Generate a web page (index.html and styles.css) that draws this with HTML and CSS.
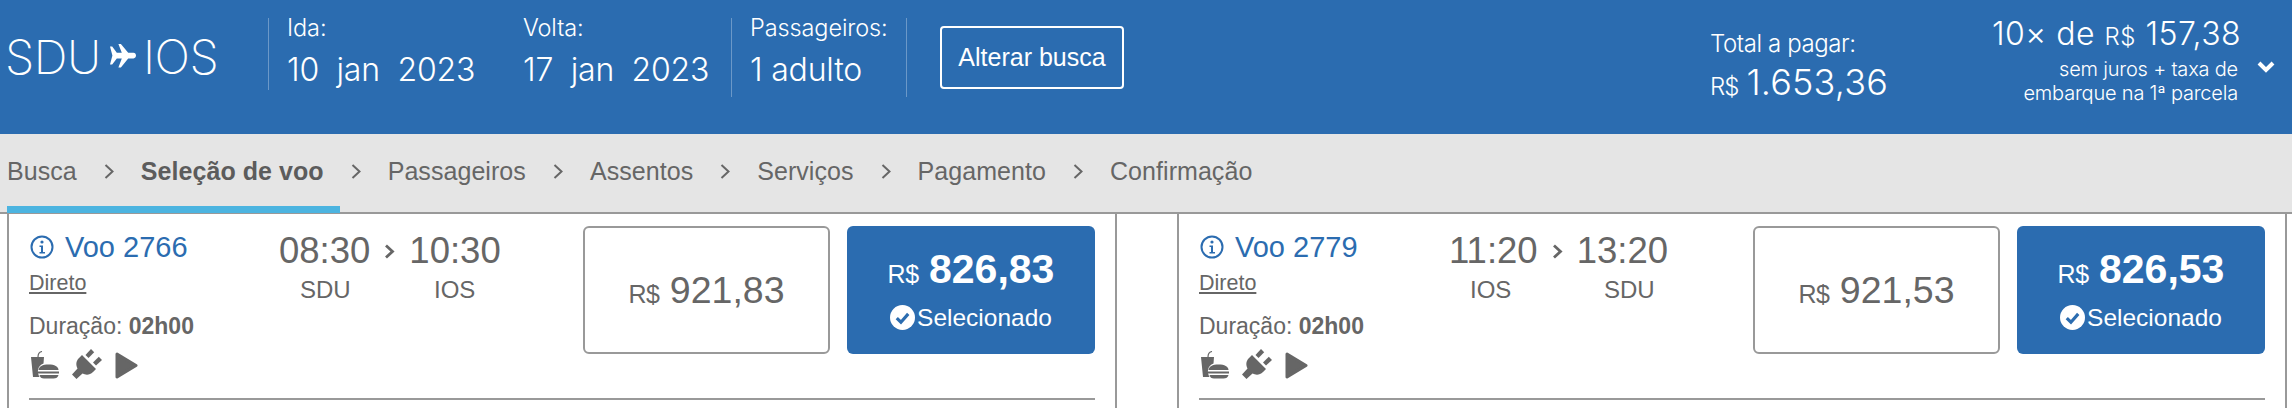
FILE: index.html
```html
<!DOCTYPE html>
<html lang="pt-BR">
<head>
<meta charset="utf-8">
<title>Seleção de voo</title>
<link rel="stylesheet" href="styles.css">
</head>
<body>
<header class="top">
  <div class="route">
    <span>SDU</span>
    <svg class="plane" viewBox="0 0 26 24"><path d="M0 2.500h2.200l4.600 6.300h5L8.400 0h2.500l7.300 8.800h5.300c1.500 0 2.500 1.300 2.500 2.800s-1 2.800-2.500 2.800h-5.300l-7.300 9.100H8.400l3.400-9.100h-5l-4.600 6.200H0l2.400-9z" fill="#fff"/></svg>
    <span>IOS</span>
  </div>
  <div class="field field-date">
    <div class="label">Ida:</div>
    <div class="value">10&nbsp; jan&nbsp; 2023</div>
  </div>
  <div class="field field-date2">
    <div class="label">Volta:</div>
    <div class="value">17&nbsp; jan&nbsp; 2023</div>
  </div>
  <div class="field field-pax">
    <div class="label">Passageiros:</div>
    <div class="value">1 adulto</div>
  </div>
  <button class="change">Alterar busca</button>
  <div class="total">
    <div class="total-label">Total a pagar:</div>
    <div class="total-value"><small>R$</small>1.653,36</div>
  </div>
  <div class="install">
    <div class="install-main">10× de <small>R$</small> 157,38</div>
    <div class="install-note">sem juros + taxa de<br>embarque na 1ª parcela</div>
  </div>
  <svg class="drop" viewBox="0 0 18 12"><path d="M2 2l7 7 7-7" fill="none" stroke="#fff" stroke-width="4"/></svg>
</header>

<nav class="steps">
  <span>Busca</span>
  <svg class="sep" viewBox="0 0 10 15"><path d="M1.500 1l7 6.500-7 6.500" fill="none" stroke="#666" stroke-width="2"/></svg>
  <b>Seleção de voo</b>
  <svg class="sep" viewBox="0 0 10 15"><path d="M1.500 1l7 6.500-7 6.500" fill="none" stroke="#666" stroke-width="2"/></svg>
  <span>Passageiros</span>
  <svg class="sep" viewBox="0 0 10 15"><path d="M1.500 1l7 6.500-7 6.500" fill="none" stroke="#666" stroke-width="2"/></svg>
  <span>Assentos</span>
  <svg class="sep" viewBox="0 0 10 15"><path d="M1.500 1l7 6.500-7 6.500" fill="none" stroke="#666" stroke-width="2"/></svg>
  <span>Serviços</span>
  <svg class="sep" viewBox="0 0 10 15"><path d="M1.500 1l7 6.500-7 6.500" fill="none" stroke="#666" stroke-width="2"/></svg>
  <span>Pagamento</span>
  <svg class="sep" viewBox="0 0 10 15"><path d="M1.500 1l7 6.500-7 6.500" fill="none" stroke="#666" stroke-width="2"/></svg>
  <span>Confirmação</span>
  <i class="progress"></i>
</nav>

<main class="cards">
  <section class="card">
    <div class="flight">
      <div class="info">
        <a class="code">
          <svg class="i-info" viewBox="0 0 24 24"><circle cx="12" cy="12" r="10.500" fill="none" stroke="#2b6cb0" stroke-width="2"/><circle cx="12" cy="7" r="1.600" fill="#2b6cb0"/><path d="M9.500 10.500h3.500v6.500h2v1.500H9.500V17h1.500v-5H9.500z" fill="#2b6cb0"/></svg>
          Voo 2766
        </a>
        <div class="direct">Direto</div>
        <div class="dur">Duração: <b>02h00</b></div>
        <div class="amen">
          <svg class="a-food" viewBox="0 0 28 28"><path d="M0 6h13l-.5 6.500c-3 1-5 3.500-5.500 6.500-.3 2 .2 5 1.500 7H2z" fill="#666"/><path d="M7 6c0-3 1-5 4-5.500" fill="none" stroke="#666" stroke-width="1.200"/><path d="M7.500 19c.3-3.500 4-5.500 10-5.500s10 2 10 5.500z M7 20.500h21v2H7z M8 24h19.500c-.5 2.500-2.500 3.500-5 3.500h-9.500c-2.500 0-4-1-4.500-3.500z" fill="#666"/></svg>
          <svg class="a-plug" viewBox="0 0 30 30"><g fill="#666"><path d="M10 6l14 14-3 3c-3.500 3.500-7.500 3-10.500 1.500L4.500 30 0 25.500l5.500-6C4 16.500 3.500 12.500 7 9z"/><path d="M13.500 6l5.500-6 3.200 3.200-5.700 5.800z"/><path d="M21 13.500l5.800-5.700 3.200 3.200-6 5.500z"/></g></svg>
          <svg class="a-play" viewBox="0 0 23 27"><path d="M2 2l19 11.500L2 25z" fill="#666" stroke="#666" stroke-width="3" stroke-linejoin="round"/></svg>
        </div>
      </div>
      <div class="times">
        <div class="clock"><span>08:30</span><svg class="t-sep" viewBox="0 0 11 15"><path d="M2 1.500l6.500 6-6.500 6" fill="none" stroke="#666" stroke-width="2.800"/></svg><span>10:30</span></div>
        <div class="ports"><span>SDU</span><span>IOS</span></div>
      </div>
      <div class="fare">
        <div class="fare-main"><small>R$</small> 921,83</div>
      </div>
      <div class="fare selected">
        <div class="fare-main"><small>R$</small> <b>826,83</b></div>
        <div class="fare-state">
          <svg class="check" viewBox="0 0 24 24"><circle cx="12" cy="12" r="12" fill="#fff"/><path d="M6.500 12.500l4 4 7-8" fill="none" stroke="#2b6cb0" stroke-width="3"/></svg>Selecionado
        </div>
      </div>
    </div>
    <hr class="rule">
  </section>

  <section class="card">
    <div class="flight">
      <div class="info">
        <a class="code">
          <svg class="i-info" viewBox="0 0 24 24"><circle cx="12" cy="12" r="10.500" fill="none" stroke="#2b6cb0" stroke-width="2"/><circle cx="12" cy="7" r="1.600" fill="#2b6cb0"/><path d="M9.500 10.500h3.500v6.500h2v1.500H9.500V17h1.500v-5H9.500z" fill="#2b6cb0"/></svg>
          Voo 2779
        </a>
        <div class="direct">Direto</div>
        <div class="dur">Duração: <b>02h00</b></div>
        <div class="amen">
          <svg class="a-food" viewBox="0 0 28 28"><path d="M0 6h13l-.5 6.500c-3 1-5 3.500-5.500 6.500-.3 2 .2 5 1.500 7H2z" fill="#666"/><path d="M7 6c0-3 1-5 4-5.500" fill="none" stroke="#666" stroke-width="1.200"/><path d="M7.500 19c.3-3.500 4-5.500 10-5.500s10 2 10 5.500z M7 20.500h21v2H7z M8 24h19.500c-.5 2.500-2.500 3.500-5 3.500h-9.500c-2.500 0-4-1-4.500-3.500z" fill="#666"/></svg>
          <svg class="a-plug" viewBox="0 0 30 30"><g fill="#666"><path d="M10 6l14 14-3 3c-3.500 3.500-7.500 3-10.500 1.500L4.500 30 0 25.500l5.500-6C4 16.500 3.500 12.500 7 9z"/><path d="M13.500 6l5.500-6 3.200 3.200-5.700 5.800z"/><path d="M21 13.500l5.800-5.700 3.200 3.200-6 5.500z"/></g></svg>
          <svg class="a-play" viewBox="0 0 23 27"><path d="M2 2l19 11.500L2 25z" fill="#666" stroke="#666" stroke-width="3" stroke-linejoin="round"/></svg>
        </div>
      </div>
      <div class="times">
        <div class="clock"><span>11:20</span><svg class="t-sep" viewBox="0 0 11 15"><path d="M2 1.500l6.500 6-6.500 6" fill="none" stroke="#666" stroke-width="2.800"/></svg><span>13:20</span></div>
        <div class="ports"><span>IOS</span><span>SDU</span></div>
      </div>
      <div class="fare">
        <div class="fare-main"><small>R$</small> 921,53</div>
      </div>
      <div class="fare selected">
        <div class="fare-main"><small>R$</small> <b>826,53</b></div>
        <div class="fare-state">
          <svg class="check" viewBox="0 0 24 24"><circle cx="12" cy="12" r="12" fill="#fff"/><path d="M6.500 12.500l4 4 7-8" fill="none" stroke="#2b6cb0" stroke-width="3"/></svg>Selecionado
        </div>
      </div>
    </div>
    <hr class="rule">
  </section>
</main>
</body>
</html>
```

FILE: styles.css
```css
* { box-sizing: border-box; }
html, body { margin: 0; height: 408px; overflow: hidden; background: #fff; }
body { font-family: "Liberation Sans", Arial, sans-serif; color: #666; }

.top {
  display: flex;
  align-items: flex-start;
  height: 134px;
  padding: 18px 0 0 5px;
  background: #2b6cb0;
  color: #fff;
  font-family: Inter, "Liberation Sans", sans-serif;
  font-weight: 300;
}
.route {
  display: flex;
  align-items: center;
  gap: 7px;
  width: 263px;
  height: 76px;
  font-size: 47px;
  font-weight: 200;
  letter-spacing: -.4px;
}
.plane { width: 26px; height: 24px; margin-left: 2px; }
.field { height: 72px; padding-left: 18px; }
.field-date { width: 255px; border-left: 1px solid #6b98c8; }
.field-date2 { width: 208px; padding-left: 0; }
.field-pax { width: 176px; height: 79px; padding-left: 18px; border-left: 1px solid #6b98c8; border-right: 1px solid #6b98c8; }
.label { font-size: 23.500px; line-height: 20px; letter-spacing: -.1px; }
.value { margin-top: 14px; font-size: 32px; line-height: 36px; letter-spacing: -.2px; white-space: nowrap; }
.change {
  width: 184px;
  height: 63px;
  margin: 8px 0 0 33px;
  padding: 0;
  border: 2px solid #fff;
  border-radius: 4px;
  background: transparent;
  color: #fff;
  font: 25px "Liberation Sans", sans-serif;
}
.total { width: 282px; margin: 12px 0 0 586px; }
.total-label { font-size: 24px; line-height: 28px; letter-spacing: -.4px; }
.total-value { margin-top: 4px; font-size: 36px; line-height: 40px; letter-spacing: .2px; white-space: nowrap; }
.total-value small { margin-right: 8px; font-size: 24px; letter-spacing: -1px; }
.install { width: 246px; margin-top: 0; text-align: right; }
.install-main { font-size: 32px; line-height: 32px; letter-spacing: .5px; white-space: nowrap; }
.install-main small { font-size: 24px; }
.install-note { margin-top: 4px; font-size: 20px; line-height: 24px; letter-spacing: -.2px; white-space: nowrap; }
.drop { width: 18px; height: 12px; margin: 43px 0 0 19px; }

.steps {
  position: relative;
  display: flex;
  align-items: center;
  gap: 27px;
  height: 80px;
  padding: 0 0 4px 7px;
  border-bottom: 2px solid #999;
  background: #e5e5e5;
  font-size: 25px;
  letter-spacing: .06px;
}
.sep { width: 10px; height: 15px; }
.steps b { color: #5c5c5c; }
.progress { position: absolute; left: 7px; bottom: -1px; width: 333px; height: 7px; background: #4cb4e0; }

.cards { display: flex; gap: 60px; padding-left: 7px; }
.card {
  flex: none;
  width: 1110px;
  height: 194px;
  padding: 12px 20px 0;
  border-left: 2px solid #999;
  border-right: 2px solid #999;
}
.flight { display: flex; height: 172px; }
.info { width: 250px; }
.code { display: flex; align-items: center; gap: 11px; height: 30px; margin: 6px 0 0 1px; color: #2b6cb0; font-size: 29px; }
.i-info { width: 24px; height: 24px; }
.direct { width: max-content; margin-top: 8px; font-size: 21.500px; line-height: 26px; text-decoration: underline; }
.dur { margin-top: 17px; font-size: 23px; line-height: 26px; }
.amen { display: flex; align-items: flex-end; margin: 10px 0 0 2px; }
.a-food { width: 28px; height: 28px; }
.a-plug { width: 30px; height: 30px; margin-left: 13px; }
.a-play { width: 23px; height: 27px; margin-left: 13px; }
.times { width: 304px; padding-top: 5px; }
.clock { display: flex; align-items: center; font-size: 36.500px; line-height: 40px; }
.t-sep { width: 11px; height: 15px; margin: 0 14px; }
.ports { display: flex; margin-top: 5px; font-size: 24px; line-height: 28px; }
.ports span { width: 134px; padding-left: 21px; }
.fare {
  display: flex;
  flex-direction: column;
  align-items: center;
  justify-content: center;
  width: 247px;
  height: 128px;
  border: 2px solid #999;
  border-radius: 6px;
  font-size: 37.500px;
}
.fare-main small { font-size: 25px; letter-spacing: -.5px; }
.fare > .fare-main { padding-top: 4px; }
.selected {
  width: 248px;
  margin-left: 17px;
  border: 0;
  background: #2b6cb0;
  color: #fff;
}
.selected b { font-size: 41px; }
.fare-main { line-height: 44px; white-space: nowrap; }
.selected > .fare-main { margin-top: -2px; padding-top: 0; }
.fare-state { display: flex; align-items: center; gap: 2px; margin-top: 8px; font-size: 24.500px; line-height: 28px; }
.check { width: 25px; height: 25px; }
.rule { height: 2px; margin: 0; border: 0; background: #999; }
```
